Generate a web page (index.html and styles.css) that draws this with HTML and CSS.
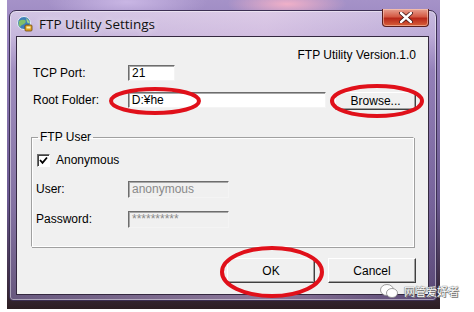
FILE: index.html
```html
<!DOCTYPE html>
<html lang="en">
<head>
    <meta charset="UTF-8">
    <title>FTP Utility Settings</title>
    <link rel="stylesheet" href="styles.css">
</head>
<body>
    <div class="desktop">
        <div class="window">
            <div class="titlebar">
                <svg class="app-icon" width="16" height="16" viewBox="0 0 16 16">
                    <circle cx="7" cy="7" r="6.5" fill="#3d7fb8"/>
                    <path d="M2 5 Q5 3 8 4 Q10 6 7 8 Q4 9 3 11 Q1 9 2 5 Z" fill="#7fbf6a"/>
                    <path d="M9 2 Q12 4 13 7 Q11 8 10 6 Z" fill="#9fd48a"/>
                    <circle cx="7" cy="7" r="6.5" fill="none" stroke="#e8eef4" stroke-width="1"/>
                    <rect x="8" y="9" width="7" height="6" rx="1" fill="#e0a020" stroke="#6a4a10" stroke-width="0.8"/>
                    <rect x="9.5" y="10.5" width="4" height="2" fill="#fff2b0"/>
                </svg>
                <span class="title">FTP Utility Settings</span>
                <div class="close">
                    <svg width="14" height="11" viewBox="0 0 14 11">
                        <path d="M2 1 L12 10 M12 1 L2 10" stroke="#3a1010" stroke-width="4" stroke-linecap="round"/>
                        <path d="M2 1 L12 10 M12 1 L2 10" stroke="#ffffff" stroke-width="2.4" stroke-linecap="round"/>
                    </svg>
                </div>
            </div>
            <div class="client">
                <div class="version">FTP Utility Version.1.0</div>
                <div class="row">
                    <span class="label">TCP Port:</span>
                    <div class="field port">21</div>
                </div>
                <div class="row">
                    <span class="label">Root Folder:</span>
                    <div class="field folder">D:&yen;he</div>
                    <button class="btn browse">Browse...</button>
                </div>
                <fieldset class="group">
                    <legend>FTP User</legend>
                    <div class="check-row">
                        <span class="checkbox">
                            <svg width="9" height="9" viewBox="0 0 9 9">
                                <path d="M1 4 L3.5 6.8 L8 1.5" fill="none" stroke="#000" stroke-width="1.8"/>
                            </svg>
                        </span>
                        <span>Anonymous</span>
                    </div>
                    <div class="user-row first">
                        <span class="label">User:</span>
                        <div class="field disabled">anonymous</div>
                    </div>
                    <div class="user-row">
                        <span class="label">Password:</span>
                        <div class="field disabled">**********</div>
                    </div>
                </fieldset>
                <div class="actions">
                    <button class="btn">OK</button>
                    <button class="btn">Cancel</button>
                </div>
            </div>
        </div>
    </div>

    <!-- red marks drawn over the screenshot -->
    <svg class="marks" width="474" height="312" viewBox="0 0 474 312">
        <ellipse cx="155" cy="101" rx="44" ry="12" fill="none" stroke="#e0101a" stroke-width="4"/>
        <ellipse cx="377" cy="101" rx="45" ry="15" fill="none" stroke="#e0101a" stroke-width="4"/>
        <ellipse cx="272" cy="272" rx="50" ry="24" fill="none" stroke="#e0101a" stroke-width="4"/>
    </svg>

    <div class="watermark">
        <svg width="18" height="14" viewBox="0 0 18 14">
            <ellipse cx="7" cy="6" rx="6.5" ry="5.5" fill="#fff" stroke="#888" stroke-width="0.8"/>
            <ellipse cx="12" cy="9" rx="5.5" ry="4.5" fill="#fff" stroke="#888" stroke-width="0.8"/>
        </svg>
        <span>网管爱好者</span>
    </div>
</body>
</html>
```

FILE: styles.css
```css
/* Page and desktop */
body {
    margin: 0;
    background: #ffffff;
    font-family: "Liberation Sans", Arial, sans-serif;
    font-size: 12px;
    color: #000;
}
.desktop {
    width: 433px;
    height: 309px;
    margin-left: 7px;
    padding: 10px 0 0 2px;
    box-sizing: border-box;
    background:
        radial-gradient(ellipse 60px 14px at 280px 4px, #f0b0c8, rgba(240, 176, 200, 0)),
        radial-gradient(ellipse 80px 20px at 120px 2px, #c9b6e4, rgba(201, 182, 228, 0)),
        linear-gradient(to bottom, #a592c8 0, #9a86c0 30px, #6a5890 200px, #3a2a3c 290px, #2c1e22 309px);
}

/* Window frame */
.window {
    width: 428px;
    height: 291px;
    box-sizing: border-box;
    border: 1px solid #3b2f52;
    border-radius: 7px 7px 4px 4px;
    padding: 0 7px 5px 6px;
    background:
        linear-gradient(to right, rgba(255, 255, 255, 0.15), rgba(255, 230, 245, 0.35) 60%, rgba(180, 170, 220, 0.1)),
        linear-gradient(to bottom, #c9bbdf 0, #bcaad6 25px, #8f7ab4 60px, #6c5890 200px, #4c3a66 291px);
    box-shadow: inset 0 0 0 1px rgba(255, 255, 255, 0.45);
}
.titlebar {
    height: 25px;
    display: flex;
    align-items: flex-start;
}
.app-icon {
    margin: 5px 0 0 1px;
}
.title {
    margin: 4px 0 0 6px;
    font-family: "Open Sans", "Noto Sans", sans-serif;
    font-size: 13.5px;
    line-height: 18px;
    color: #111;
    text-shadow: 0 0 6px rgba(255, 255, 255, 0.9);
}
.close {
    margin-left: auto;
    margin-top: -2px;
    width: 45px;
    height: 17px;
    border: 1px solid #5a1e1e;
    border-top: none;
    border-radius: 0 0 4px 4px;
    background: linear-gradient(to bottom, #e8a090 0, #d45a45 45%, #b8281a 55%, #d8603a 100%);
    display: flex;
    align-items: center;
    justify-content: center;
    box-shadow: inset 0 0 0 1px rgba(255, 220, 200, 0.5);
}

/* Client area */
.client {
    height: 259px;
    box-sizing: border-box;
    border: 1px solid #34283f;
    background: #f0f0f0;
    padding: 11px 12px 0 16px;
}
.version {
    text-align: right;
    line-height: 14px;
}
.row {
    display: flex;
    align-items: flex-start;
    margin-top: 11px;
}
.version + .row {
    margin-top: 3px;
}
.label {
    line-height: 16px;
}
.row .label {
    width: 95px;
}
.field {
    height: 16px;
    box-sizing: border-box;
    border: 1px solid;
    border-color: #6d6d6d #f4f4f4 #f4f4f4 #6d6d6d;
    box-shadow: inset 1px 1px 0 #a8a8a8;
    background: #fff;
    padding: 0 3px;
    line-height: 14px;
}
.port {
    width: 47px;
}
.folder {
    width: 199px;
}
.btn {
    height: 25px;
    width: 88px;
    box-sizing: border-box;
    padding: 0;
    font-family: inherit;
    font-size: 12px;
    color: #000;
    background: #f0f0f0;
    border: 1px solid;
    border-color: #ffffff #404040 #404040 #ffffff;
    box-shadow: inset -1px -1px 0 #a0a0a0;
}
.browse {
    height: 18px;
    width: 81px;
    margin-left: 9px;
}

/* FTP User group */
.group {
    margin: 20px 2px 0 -2px;
    padding: 0 0 0 5px;
    height: 117px;
    box-sizing: border-box;
    border: 1px solid;
    border-color: #a0a0a0 #ffffff #ffffff #a0a0a0;
    box-shadow: 1px 1px 0 #a0a0a0, inset 1px 1px 0 #ffffff;
}
.group legend {
    padding: 0 2px;
    margin-left: 1px;
    line-height: 14px;
}
.check-row {
    display: flex;
    align-items: center;
    margin-top: 9px;
    line-height: 14px;
}
.checkbox {
    width: 11px;
    height: 11px;
    border: 1px solid;
    border-color: #6d6d6d #ffffff #ffffff #6d6d6d;
    box-shadow: inset 1px 1px 0 #404040;
    background: #fff;
    display: flex;
    align-items: center;
    justify-content: center;
    margin-right: 6px;
}
.user-row {
    display: flex;
    margin-top: 13px;
}
.user-row.first {
    margin-top: 14px;
}
.user-row .label {
    width: 92px;
    margin-left: -1px;
}
.field.disabled {
    width: 101px;
    background: #f0f0f0;
    color: #8a8a8a;
    height: 17px;
}

/* Bottom buttons */
.actions {
    display: flex;
    justify-content: flex-end;
    gap: 13px;
    margin-top: 11px;
}

/* Overlays */
.marks {
    position: absolute;
    left: 0;
    top: 0;
}
.watermark {
    position: absolute;
    left: 380px;
    top: 284px;
    display: flex;
    align-items: center;
    gap: 6px;
    font-family: "Noto Sans CJK SC", sans-serif;
    font-size: 11px;
    line-height: 14px;
    color: #ffffff;
    text-shadow: 0 0 1px #555, 0 0 1px #555, 1px 1px 0 #888;
}
```
